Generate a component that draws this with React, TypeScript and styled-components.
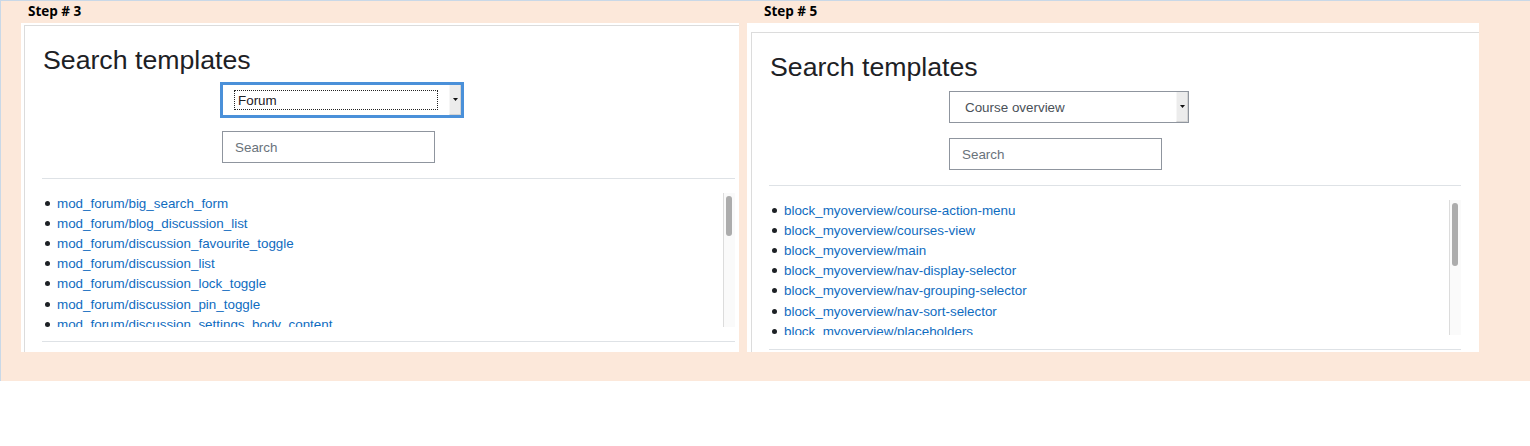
import React, { FC } from 'react';
import styled, { createGlobalStyle } from 'styled-components';

const GlobalStyle = createGlobalStyle`
	html, body {
		margin: 0;
		padding: 0;
		background: #ffffff;
	}
	* {
		box-sizing: border-box;
	}
`;

interface IStep {
	label: string;
	selected: string;
	focused: boolean;
	items: string[];
	thumb: number;
}

const steps: IStep[] = [
	{
		label: 'Step # 3',
		selected: 'Forum',
		focused: true,
		thumb: 40,
		items: [
			'mod_forum/big_search_form',
			'mod_forum/blog_discussion_list',
			'mod_forum/discussion_favourite_toggle',
			'mod_forum/discussion_list',
			'mod_forum/discussion_lock_toggle',
			'mod_forum/discussion_pin_toggle',
			'mod_forum/discussion_settings_body_content',
		],
	},
	{
		label: 'Step # 5',
		selected: 'Course overview',
		focused: false,
		thumb: 63,
		items: [
			'block_myoverview/course-action-menu',
			'block_myoverview/courses-view',
			'block_myoverview/main',
			'block_myoverview/nav-display-selector',
			'block_myoverview/nav-grouping-selector',
			'block_myoverview/nav-sort-selector',
			'block_myoverview/placeholders',
		],
	},
];

const layouts = [
	{ width: 718, labelIndent: 7, offsetTop: 2, offsetLeft: 3, padRight: 4, scroll: 134 },
	{ width: 732, labelIndent: 17, offsetTop: 9, offsetLeft: 4, padRight: 18, scroll: 135 },
];

export default function App() {
	return (
		<>
			<GlobalStyle />
			<StyledPage>
				{steps.map((step, index) => {
					const layout = layouts[index];
					return (
						<StyledColumn key={step.label} $width={layout.width}>
							<StyledStepLabel $indent={layout.labelIndent}>{step.label}</StyledStepLabel>
							<StyledPanel $top={layout.offsetTop} $left={layout.offsetLeft}>
								<StyledInner $padRight={layout.padRight}>
									<TemplateSearch step={step} scrollHeight={layout.scroll} />
								</StyledInner>
							</StyledPanel>
						</StyledColumn>
					);
				})}
			</StyledPage>
		</>
	);
}

const TemplateSearch: FC<{ step: IStep; scrollHeight: number }> = ({ step, scrollHeight }) => {
	return (
		<>
			<StyledTitle>Search templates</StyledTitle>
			<StyledForm>
				<StyledSelect $focused={step.focused}>
					{step.focused ? (
						<StyledFocusRing>{step.selected}</StyledFocusRing>
					) : (
						<StyledSelectText>{step.selected}</StyledSelectText>
					)}
					<StyledArrow>
						<svg width="5" height="3" viewBox="0 0 5 3">
							<path d="M0 0h5L2.5 3z" fill="#111" />
						</svg>
					</StyledArrow>
				</StyledSelect>
				<StyledSearch>Search</StyledSearch>
			</StyledForm>
			<StyledRule />
			<StyledScrollBox $height={scrollHeight}>
				<StyledList>
					{step.items.map((item) => (
						<StyledItem key={item}>
							<StyledBullet />
							<StyledLink>{item}</StyledLink>
						</StyledItem>
					))}
				</StyledList>
				<StyledTrack>
					<StyledThumb $height={step.thumb} />
				</StyledTrack>
			</StyledScrollBox>
			<StyledRule $gap={14} />
		</>
	);
};

const StyledPage = styled.div`
	display: flex;
	gap: 8px;
	height: 381px;
	padding-left: 20px;
	background: #fce8da;
	border-top: 1px solid #c9d8e7;
	border-left: 1px solid #c9d8e7;
	font-family: 'Liberation Sans', Arial, sans-serif;
`;

const StyledColumn = styled.div<{ $width: number }>`
	display: flex;
	flex-direction: column;
	width: ${({ $width }) => $width}px;
`;

const StyledStepLabel = styled.div<{ $indent: number }>`
	height: 22px;
	padding-left: ${({ $indent }) => $indent}px;
	padding-top: 2px;
	font-family: 'Open Sans', 'Liberation Sans', sans-serif;
	font-weight: 700;
	font-size: 13.5px;
	line-height: 17px;
	color: #000;
`;

const StyledPanel = styled.div<{ $top: number; $left: number }>`
	display: flex;
	height: 329px;
	padding-top: ${({ $top }) => $top}px;
	padding-left: ${({ $left }) => $left}px;
	background: #fff;
	overflow: hidden;
`;

const StyledInner = styled.div<{ $padRight: number }>`
	flex: 1;
	display: flex;
	flex-direction: column;
	padding: 0 ${({ $padRight }) => $padRight}px 0 17px;
	border-top: 1px solid #dcdcdc;
	border-left: 1px solid #dcdcdc;
`;

const StyledTitle = styled.h2`
	margin: 18px 0 0 1px;
	font-size: 26.7px;
	font-weight: 400;
	line-height: 32px;
	color: #1d2125;
`;

const StyledForm = styled.div`
	display: flex;
	flex-direction: column;
	gap: 15px;
	margin-top: 8px;
	padding-left: 180px;
`;

const StyledSelect = styled.div<{ $focused: boolean }>`
	display: flex;
	align-items: stretch;
	width: 240px;
	height: 32px;
	background: #fff;
	border: 1px solid ${({ $focused }) => ($focused ? '#4a90d9' : '#8f959e')};
	box-shadow: ${({ $focused }) => ($focused ? '0 0 0 2px #4a90d9' : 'none')};
	font-size: 13.4px;
`;

const StyledFocusRing = styled.div`
	display: flex;
	align-items: center;
	width: 204px;
	height: 20px;
	margin: 5px 11px 0 11px;
	padding-left: 3px;
	border: 1px dotted #222;
	color: #1d2125;
`;

const StyledSelectText = styled.div`
	flex: 1;
	display: flex;
	align-items: center;
	padding-left: 15px;
	color: #495057;
`;

const StyledArrow = styled.div`
	display: flex;
	align-items: center;
	justify-content: center;
	width: 12px;
	margin-left: auto;
	background: #ececec;
	border-left: 1px solid #f6f6f6;
	border-right: 1px solid #d4d4d4;
	border-bottom: 1px solid #d4d4d4;
`;

const StyledSearch = styled.div`
	display: flex;
	align-items: center;
	width: 213px;
	height: 32px;
	padding-left: 12px;
	border: 1px solid #8f959e;
	font-size: 13.4px;
	color: #6a737b;
`;

const StyledRule = styled.div<{ $gap?: number }>`
	height: 1px;
	margin-top: ${({ $gap = 15 }) => $gap}px;
	background: #dee2e6;
`;

const StyledScrollBox = styled.div<{ $height: number }>`
	display: flex;
	height: ${({ $height }) => $height}px;
	margin-top: 14px;
`;

const StyledList = styled.ul`
	flex: 1;
	margin: 0;
	padding: 0 0 0 3px;
	list-style: none;
	overflow: hidden;
`;

const StyledItem = styled.li`
	display: flex;
	align-items: center;
	flex: none;
	height: 20.2px;
	font-size: 13.4px;
	white-space: nowrap;
`;

const StyledBullet = styled.span`
	flex: none;
	width: 5px;
	height: 5px;
	margin-right: 7px;
	border-radius: 50%;
	background: #1d2125;
`;

const StyledLink = styled.span`
	color: #0f6cbf;
`;

const StyledTrack = styled.div`
	width: 12px;
	padding: 3px 0 0 2px;
	background: #fafafa;
	border-left: 1px solid #dcdcdc;
`;

const StyledThumb = styled.div<{ $height: number }>`
	width: 6px;
	height: ${({ $height }) => $height}px;
	border-radius: 3px;
	background: #acacac;
`;
